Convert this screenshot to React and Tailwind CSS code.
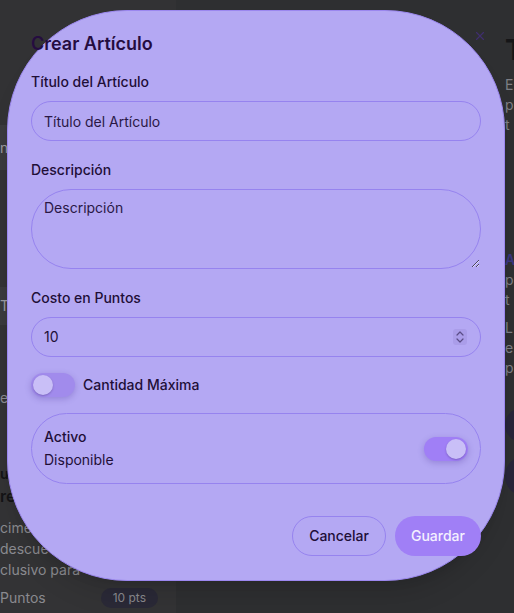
import { X } from 'lucide-react';

const Switch = ({ on }) => (
  <div className={`w-11 h-6 rounded-full p-0.5 flex items-center shadow-[0_2px_6px_rgba(60,30,140,0.25)] ${on ? 'bg-[#a07ff6] justify-end' : 'bg-[#a18bec] justify-start'}`}>
    <div className="w-5 h-5 rounded-full bg-[#c9bff7] shadow-[0_1px_2px_rgba(40,20,90,0.3)]" />
  </div>
);

const Label = ({ children }) => (
  <label className="block text-sm leading-5 font-medium text-[#1f0f38]">{children}</label>
);

const App = () => {
  return (
    <div className="relative w-[514px] h-[613px] overflow-hidden bg-[#2e2f31] font-['Inter',sans-serif]">
      {/* page behind the dialog */}
      <div className="flex h-full">
        <div className="w-[176px] bg-[#333335] flex flex-col overflow-hidden">
          <div className="h-[125px] bg-[#323234]" />
          <div className="h-[45px] bg-[#3a3a3d] flex items-center text-sm text-[#9a9aa0]">n</div>
          <div className="h-[117px]" />
          <div className="h-[38px] bg-[#3a3a3d] flex items-center text-sm text-[#9a9aa0]">T</div>
          <div className="h-[63px]" />
          <div className="text-sm text-[#8a8a8f] leading-5">e</div>
          <div className="h-[56px]" />
          <div className="text-sm font-semibold text-[#141416] leading-5">u</div>
          <div className="text-base font-semibold text-[#141416] leading-6">re</div>
          <div className="mt-[9px] text-sm text-[#8a8a8f] leading-[21px]">
            <p>cime</p>
            <p>descue</p>
            <p>clusivo para</p>
          </div>
          <div className="mt-[8px] flex items-center justify-between pr-[18px]">
            <span className="text-sm text-[#8a8a8f]">Puntos</span>
            <span className="px-3 py-0.5 rounded-full bg-[#2a2937] text-xs text-[#8a8a8f]">10 pts</span>
          </div>
        </div>
        <div className="flex-1" />
        <div className="w-[9px] pt-[34px] flex flex-col">
          <div className="text-[28px] font-bold leading-8 text-[#151517]">T</div>
          <div className="mt-[9px] text-sm leading-5 text-[#7e7e84]">
            <p>E</p>
            <p>p</p>
            <p>t</p>
          </div>
          <div className="mt-[115px] text-sm font-semibold leading-5 text-[#3a3580]">A</div>
          <div className="text-sm leading-5 text-[#7e7e84]">
            <p>p</p>
            <p>t</p>
          </div>
          <div className="mt-2 text-sm leading-5 text-[#7e7e84]">
            <p>L</p>
            <p>e</p>
            <p>p</p>
          </div>
          <div className="mt-[30px] w-[40px] h-[34px] rounded-full bg-[#282539]" />
          <div className="mt-[14px] w-[40px] h-[40px] rounded-full bg-[#282539]" />
        </div>
      </div>

      {/* dialog */}
      <div className="absolute left-[7px] top-[10px] w-[498px] h-[571px] rounded-[120px] bg-[#b4a8f3] border border-[#9b87ef] shadow-xl px-[23px] pt-[19px] pb-6 flex flex-col">
        <button className="absolute right-[17px] top-[18px] text-[#3f2e6e]">
          <X size={14} strokeWidth={2} />
        </button>
        <h2 className="text-lg leading-7 font-semibold text-[#250c40]">Crear Artículo</h2>

        <div className="mt-[14px]">
          <Label>Título del Artículo</Label>
          <input
            placeholder="Título del Artículo"
            className="mt-[9px] w-full h-10 rounded-full border border-[#9683ef] bg-transparent px-3 text-sm text-[#231038] placeholder:text-[#2a1846] outline-none"
          />
        </div>

        <div className="mt-[19px]">
          <Label>Descripción</Label>
          <textarea
            placeholder="Descripción"
            className="mt-[9px] block w-full h-20 rounded-[40px] border border-[#9683ef] bg-transparent px-3 py-2 text-sm text-[#231038] placeholder:text-[#2a1846] outline-none"
          />
        </div>

        <div className="mt-[19px]">
          <Label>Costo en Puntos</Label>
          <div className="mt-[9px] w-full h-10 rounded-full border border-[#9683ef] px-3 flex items-center justify-between text-sm text-[#231038]">
            <span>10</span>
            <span className="w-[14px] h-[16px] rounded-[3px] bg-[#aa9de9] flex items-center justify-center mr-[1px]">
              <svg width="10" height="14" viewBox="0 0 10 14" fill="none" stroke="#5a4c86" strokeWidth="1.2" strokeLinecap="round" strokeLinejoin="round">
                <path d="M2 5 L5 2 L8 5" />
                <path d="M2 9 L5 12 L8 9" />
              </svg>
            </span>
          </div>
        </div>

        <div className="mt-4 flex items-center gap-2">
          <Switch on={false} />
          <span className="text-sm font-medium text-[#1f0f38]">Cantidad Máxima</span>
        </div>

        <div className="mt-4 h-[72px] rounded-full border border-[#9683ef] px-3 flex items-center justify-between">
          <div className="text-sm text-[#1f0f38] flex flex-col gap-[3px]">
            <span className="font-medium leading-5">Activo</span>
            <span className="leading-5">Disponible</span>
          </div>
          <Switch on />
        </div>

        <div className="mt-8 flex justify-end gap-[9px]">
          <button className="h-10 px-4 rounded-full border border-[#9683ef] text-sm font-medium text-[#1f0f38]">Cancelar</button>
          <button className="h-10 px-4 rounded-full bg-[#a07ff6] text-sm font-medium text-[#f4f0ff]">Guardar</button>
        </div>
      </div>
    </div>
  );
};

export default App;
